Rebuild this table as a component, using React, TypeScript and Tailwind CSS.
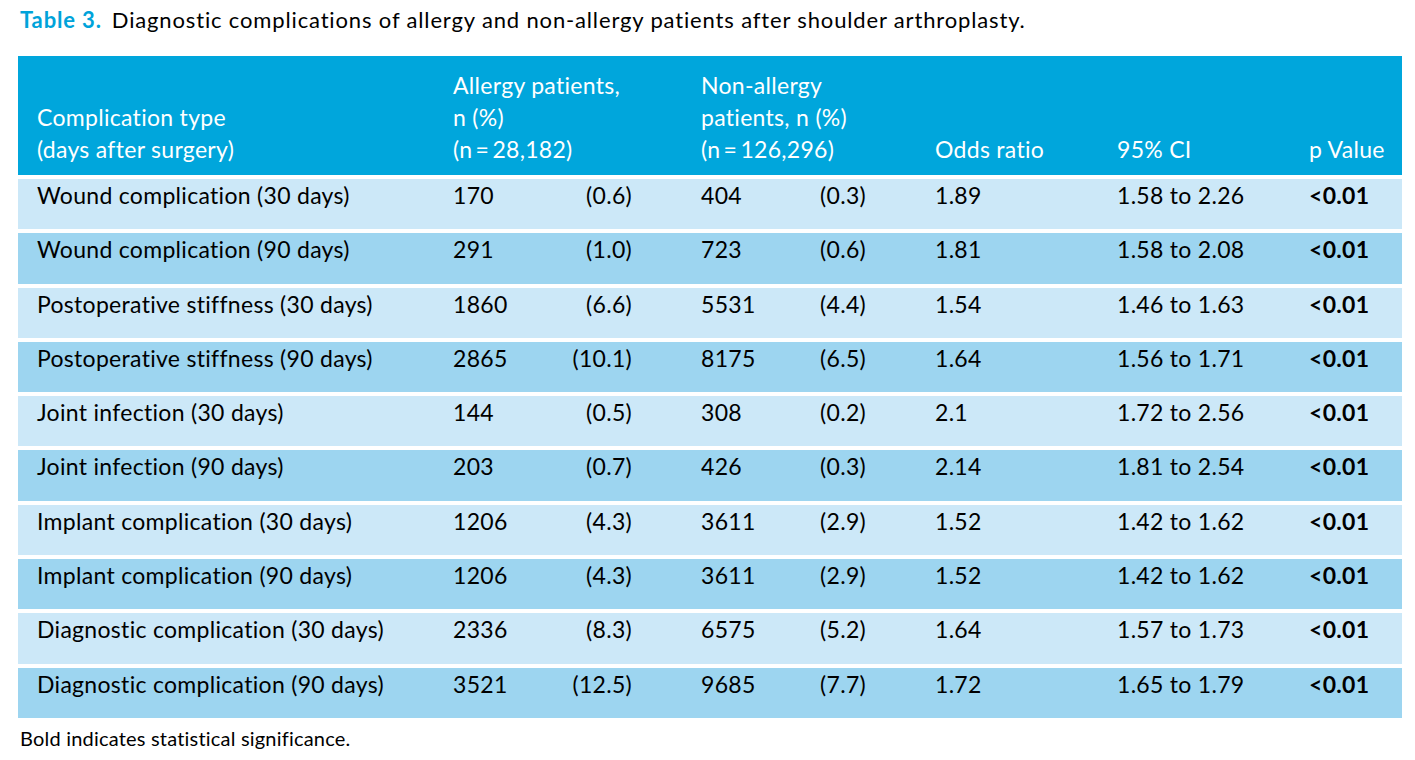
const rows = [
  ["Wound complication (30 days)", "170", "(0.6)", "404", "(0.3)", "1.89", "1.58 to 2.26"],
  ["Wound complication (90 days)", "291", "(1.0)", "723", "(0.6)", "1.81", "1.58 to 2.08"],
  ["Postoperative stiffness (30 days)", "1860", "(6.6)", "5531", "(4.4)", "1.54", "1.46 to 1.63"],
  ["Postoperative stiffness (90 days)", "2865", "(10.1)", "8175", "(6.5)", "1.64", "1.56 to 1.71"],
  ["Joint infection (30 days)", "144", "(0.5)", "308", "(0.2)", "2.1", "1.72 to 2.56"],
  ["Joint infection (90 days)", "203", "(0.7)", "426", "(0.3)", "2.14", "1.81 to 2.54"],
  ["Implant complication (30 days)", "1206", "(4.3)", "3611", "(2.9)", "1.52", "1.42 to 1.62"],
  ["Implant complication (90 days)", "1206", "(4.3)", "3611", "(2.9)", "1.52", "1.42 to 1.62"],
  ["Diagnostic complication (30 days)", "2336", "(8.3)", "6575", "(5.2)", "1.64", "1.57 to 1.73"],
  ["Diagnostic complication (90 days)", "3521", "(12.5)", "9685", "(7.7)", "1.72", "1.65 to 1.79"],
];

const cols = "grid grid-cols-[435px_248px_234px_182px_192px_1fr]";

export default function App() {
  return (
    <div className="w-[1415px] h-[760px] bg-white text-black font-['Lato','Noto_Sans',sans-serif] overflow-hidden">
      <p className="pl-[20px] pt-[5px] text-[22px] leading-[30px] tracking-[0.85px]">
        <span className="font-bold text-[#00a3da]">Table 3.</span>
        <span className="ml-[10px]">Diagnostic complications of allergy and non-allergy patients after shoulder arthroplasty.</span>
      </p>

      <div className="ml-[18px] w-[1384px] mt-[21px] flex flex-col gap-[4px] text-[23px] leading-[32px] tracking-[0.3px]">
        <div className={`${cols} h-[119px] bg-[#00a6dc] text-white items-end pb-[10px]`}>
          <div className="pl-[19px]">
            Complication type
            <br />
            (days after surgery)
          </div>
          <div>
            Allergy patients,
            <br />
            n (%)
            <br />
            (n&thinsp;=&thinsp;28,182)
          </div>
          <div>
            Non-allergy
            <br />
            patients, n (%)
            <br />
            (n&thinsp;=&thinsp;126,296)
          </div>
          <div>Odds ratio</div>
          <div>95% CI</div>
          <div>p Value</div>
        </div>

        {rows.map((r, i) => (
          <div
            key={i}
            className={`${cols} h-[50.3px] ${i % 2 === 0 ? "bg-[#cce8f8]" : "bg-[#9dd5f0]"}`}
          >
            <div className="pl-[19px]">{r[0]}</div>
            <div>
              <div className="w-[179px] flex justify-between">
                <span>{r[1]}</span>
                <span>{r[2]}</span>
              </div>
            </div>
            <div>
              <div className="w-[165px] flex justify-between">
                <span>{r[3]}</span>
                <span>{r[4]}</span>
              </div>
            </div>
            <div>{r[5]}</div>
            <div>{r[6]}</div>
            <div className="font-bold">&lt;0.01</div>
          </div>
        ))}
      </div>

      <p className="pl-[20px] mt-[6px] text-[20px] leading-[28px] tracking-[0.2px]">Bold indicates statistical significance.</p>
    </div>
  );
}
